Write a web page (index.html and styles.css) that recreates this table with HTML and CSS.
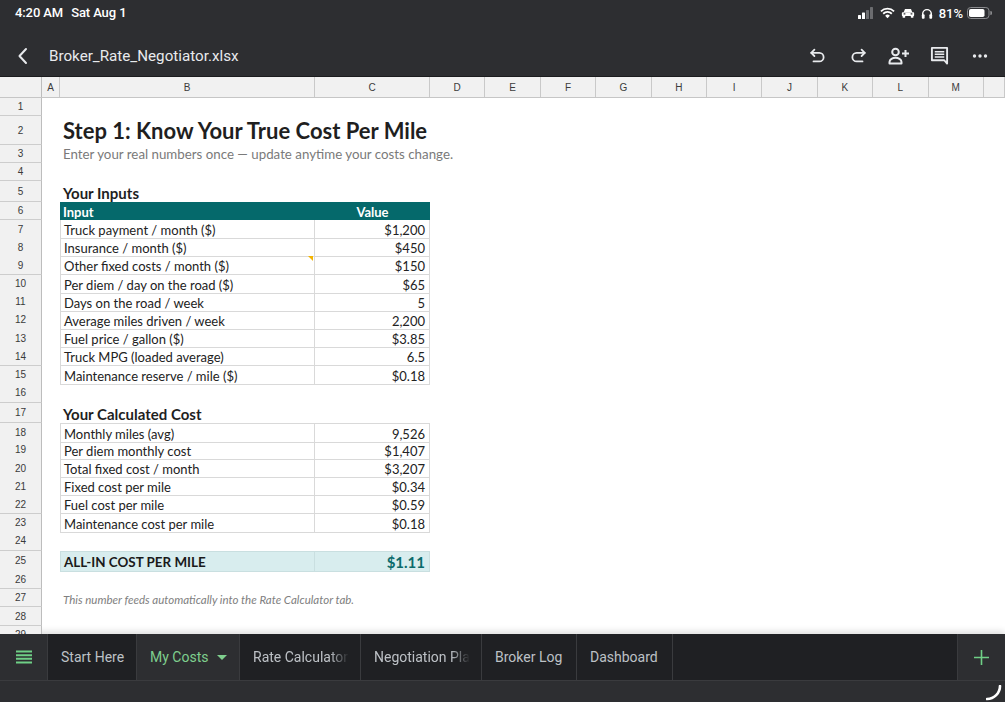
FILE: index.html
```html
<!DOCTYPE html>
<html>
<head>
<meta charset="utf-8">
<link rel="stylesheet" href="styles.css">
</head>
<body>
<div class="status">
  <div class="time">4:20 AM<span class="date">Sat Aug 1</span></div>
  <div class="sicons">
    <svg class="sig" width="16" height="12" viewBox="0 0 16 12"><rect x="0" y="8" width="3" height="4" rx=".6" fill="#fff"/><rect x="4" y="5.5" width="3" height="6.5" rx=".6" fill="#fff"/><rect x="8" y="3" width="3" height="9" rx=".6" fill="#6b6c6f"/><rect x="12" y="0" width="3" height="12" rx=".6" fill="#6b6c6f"/></svg>
    <svg width="15" height="12" viewBox="0 0 16 12"><path d="M8 11.6 L5.5 9 A3.5 3.5 0 0 1 10.5 9 Z" fill="#fff"/><path d="M3.4 6.8 A6.5 6.5 0 0 1 12.6 6.8" stroke="#fff" stroke-width="1.9" fill="none"/><path d="M1 4.3 A10 10 0 0 1 15 4.3" stroke="#fff" stroke-width="1.9" fill="none"/></svg>
    <svg width="14" height="12" viewBox="0 0 16 12"><path d="M3 5.2 L4.6 1.4 H11.4 L13 5.2 Z" fill="#fff"/><rect x="1" y="5" width="14" height="4.5" rx="1" fill="#fff"/><rect x="1.8" y="9" width="3" height="2.4" rx=".5" fill="#fff"/><rect x="11.2" y="9" width="3" height="2.4" rx=".5" fill="#fff"/><rect x="3" y="6.3" width="2" height="1.4" fill="#2d2e31"/><rect x="11" y="6.3" width="2" height="1.4" fill="#2d2e31"/></svg>
    <svg width="12" height="13" viewBox="0 0 14 14"><path d="M2 11 V7.5 A5 5 0 0 1 12 7.5 V11" stroke="#fff" stroke-width="1.7" fill="none"/><rect x="1" y="8" width="3.2" height="5" rx="1" fill="#fff"/><rect x="9.8" y="8" width="3.2" height="5" rx="1" fill="#fff"/></svg>
    <span class="batt-pct">81%</span>
    <svg width="25" height="12" viewBox="0 0 25 12"><rect x=".5" y=".5" width="21.5" height="11" rx="3.2" fill="none" stroke="#8a8b8e"/><rect x="2" y="2" width="15.5" height="8" rx="1.8" fill="#fff"/><path d="M23.3 4 A2 2 0 0 1 23.3 8 Z" fill="#8a8b8e"/></svg>
  </div>
</div>

<div class="toolbar">
  <svg class="back" width="12" height="18" viewBox="0 0 12 18"><path d="M9 2 L2.5 9 L9 16" stroke="#e8eaed" stroke-width="2" fill="none" stroke-linecap="round" stroke-linejoin="round"/></svg>
  <span class="title">Broker_Rate_Negotiator.xlsx</span>
  <div class="tools">
    <div class="tool"><svg width="18" height="18" viewBox="0 0 20 20"><path d="M6 3 L2.5 6.5 L6 10" stroke="#e8eaed" stroke-width="2" fill="none" stroke-linejoin="round" stroke-linecap="round"/><path d="M2.5 6.5 H11.5 A4.75 4.75 0 0 1 11.5 16 H5" stroke="#e8eaed" stroke-width="2" fill="none" stroke-linecap="round"/></svg></div>
    <div class="tool"><svg width="18" height="18" viewBox="0 0 20 20"><path d="M14 3 L17.5 6.5 L14 10" stroke="#e8eaed" stroke-width="2" fill="none" stroke-linejoin="round" stroke-linecap="round"/><path d="M17.5 6.5 H8.5 A4.75 4.75 0 0 0 8.5 16 H15" stroke="#e8eaed" stroke-width="2" fill="none" stroke-linecap="round"/></svg></div>
    <div class="tool"><svg width="22" height="18" viewBox="0 0 22 18"><circle cx="7.5" cy="5" r="3.3" stroke="#e8eaed" stroke-width="2" fill="none"/><path d="M1.5 16.5 V15 C1.5 12.3 4.8 10.8 7.5 10.8 C10.2 10.8 13.5 12.3 13.5 15 V16.5 Z" stroke="#e8eaed" stroke-width="2" fill="none" stroke-linejoin="round"/><path d="M17.5 3 V10 M14 6.5 H21" stroke="#e8eaed" stroke-width="2"/></svg></div>
    <div class="tool"><svg width="19" height="19" viewBox="0 0 20 20"><path d="M2 2 H18 V18.5 L15 15 H2 Z" stroke="#e8eaed" stroke-width="2" fill="none" stroke-linejoin="round"/><path d="M5 6 H15 M5 8.8 H15 M5 11.6 H15" stroke="#e8eaed" stroke-width="1.6"/></svg></div>
    <div class="tool"><svg width="16" height="6" viewBox="0 0 16 6"><circle cx="2.5" cy="3" r="1.7" fill="#e8eaed"/><circle cx="8" cy="3" r="1.7" fill="#e8eaed"/><circle cx="13.5" cy="3" r="1.7" fill="#e8eaed"/></svg></div>
  </div>
</div>

<div class="sheet">
  <div class="colhead">
    <div class="ch"></div><div class="ch">A</div><div class="ch">B</div><div class="ch">C</div><div class="ch">D</div><div class="ch">E</div><div class="ch">F</div><div class="ch">G</div><div class="ch">H</div><div class="ch">I</div><div class="ch">J</div><div class="ch">K</div><div class="ch">L</div><div class="ch">M</div><div class="ch"></div>
  </div>
  <div class="body">
    <div class="row h18"><div class="rh">1</div></div>
    <div class="row h29"><div class="rh">2</div><div class="cb title-cell">Step 1: Know Your True Cost Per Mile</div></div>
    <div class="row h18"><div class="rh">3</div><div class="cb sub">Enter your real numbers once — update anytime your costs change.</div></div>
    <div class="row h18"><div class="rh">4</div></div>
    <div class="row h21"><div class="rh">5</div><div class="cb section">Your Inputs</div></div>
    <div class="row h18"><div class="rh">6</div><div class="cb thead">Input</div><div class="cc thead center">Value</div></div>
    <div class="row h182"><div class="rh">7</div><div class="cb td">Truck payment / month ($)</div><div class="cc tv">$1,200</div></div>
    <div class="row h182"><div class="rh">8</div><div class="cb td">Insurance / month ($)</div><div class="cc tv">$450</div></div>
    <div class="row h182"><div class="rh">9</div><div class="cb td note">Other fixed costs / month ($)</div><div class="cc tv">$150</div></div>
    <div class="row h182"><div class="rh">10</div><div class="cb td">Per diem / day on the road ($)</div><div class="cc tv">$65</div></div>
    <div class="row h182"><div class="rh">11</div><div class="cb td">Days on the road / week</div><div class="cc tv">5</div></div>
    <div class="row h182"><div class="rh">12</div><div class="cb td">Average miles driven / week</div><div class="cc tv">2,200</div></div>
    <div class="row h182"><div class="rh">13</div><div class="cb td">Fuel price / gallon ($)</div><div class="cc tv">$3.85</div></div>
    <div class="row h182"><div class="rh">14</div><div class="cb td">Truck MPG (loaded average)</div><div class="cc tv">6.5</div></div>
    <div class="row h182"><div class="rh">15</div><div class="cb td">Maintenance reserve / mile ($)</div><div class="cc tv">$0.18</div></div>
    <div class="row h19"><div class="rh">16</div></div>
    <div class="row h20"><div class="rh">17</div><div class="cb section">Your Calculated Cost</div></div>
    <div class="row h182"><div class="rh">18</div><div class="cb td first">Monthly miles (avg)</div><div class="cc tv first">9,526</div></div>
    <div class="row h182"><div class="rh">19</div><div class="cb td">Per diem monthly cost</div><div class="cc tv">$1,407</div></div>
    <div class="row h182"><div class="rh">20</div><div class="cb td">Total fixed cost / month</div><div class="cc tv">$3,207</div></div>
    <div class="row h182"><div class="rh">21</div><div class="cb td">Fixed cost per mile</div><div class="cc tv">$0.34</div></div>
    <div class="row h182"><div class="rh">22</div><div class="cb td">Fuel cost per mile</div><div class="cc tv">$0.59</div></div>
    <div class="row h182"><div class="rh">23</div><div class="cb td">Maintenance cost per mile</div><div class="cc tv">$0.18</div></div>
    <div class="row h19"><div class="rh">24</div></div>
    <div class="row h20"><div class="rh">25</div><div class="cb total-l">ALL-IN COST PER MILE</div><div class="cc total-v">$1.11</div></div>
    <div class="row h18"><div class="rh">26</div></div>
    <div class="row h185"><div class="rh">27</div><div class="cb foot">This number feeds automatically into the Rate Calculator tab.</div></div>
    <div class="row h185"><div class="rh">28</div></div>
    <div class="row h18"><div class="rh">29</div></div>
  </div>
</div>

<div class="tabbar">
  <div class="menu"><svg width="16" height="14" viewBox="0 0 16 14"><path d="M0 1.5 H16 M0 5.2 H16 M0 8.8 H16 M0 12.5 H16" stroke="#6fcf86" stroke-width="2"/></svg></div>
  <div class="tab w89">Start Here</div>
  <div class="tab active w103">My Costs<span class="caret"></span></div>
  <div class="tab fade w121"><span class="lbl">Rate Calculator</span></div>
  <div class="tab fade w121"><span class="lbl">Negotiation Plan</span></div>
  <div class="tab w95">Broker Log</div>
  <div class="tab w96">Dashboard</div>
  <div class="tab-fill"></div>
  <div class="add"><svg width="15" height="15" viewBox="0 0 15 15"><path d="M7.5 0 V15 M0 7.5 H15" stroke="#6fcf86" stroke-width="1.6"/></svg></div>
</div>
<div class="homebar"><svg class="corner" width="16" height="16" viewBox="0 0 16 16"><path d="M14 1 A13 13 0 0 1 1 14" stroke="#fff" stroke-width="2.6" fill="none" stroke-linecap="round"/></svg></div>
</body>
</html>
```

FILE: styles.css
```css
* { box-sizing: border-box; }
html, body { margin: 0; padding: 0; }
body {
  width: 1005px;
  height: 702px;
  overflow: hidden;
  background: #2d2e31;
  font-family: Roboto, "Liberation Sans", sans-serif;
}

/* status bar */
.status {
  height: 35px;
  background: #2d2e31;
  display: flex;
  justify-content: space-between;
  align-items: flex-start;
  padding: 5px 13px 0 15px;
  color: #fff;
}
.time { font-size: 13px; line-height: 16px; font-weight: 500; letter-spacing: -0.1px; }
.date { margin-left: 8px; }
.sicons { display: flex; align-items: center; gap: 6px; height: 16px; }
.batt-pct { font-size: 13px; font-weight: 500; margin-right: -2px; }

/* toolbar */
.toolbar {
  height: 42px;
  background: #2d2e31;
  display: flex;
  align-items: center;
  padding: 0 5px 0 17px;
  border-bottom: 1px solid #1b1c1e;
}
.back { margin-right: 20px; }
.title { color: #e8eaed; font-size: 15.2px; }
.tools { margin-left: auto; display: flex; }
.tool { width: 40.5px; height: 40px; display: flex; align-items: center; justify-content: center; }

/* sheet */
.sheet { height: 557px; background: #fff; overflow: hidden; }
.colhead {
  display: grid;
  grid-template-columns: 42px 18px 255px 115px repeat(10, 55.4px) 1fr;
  height: 21px;
  background: #f1f1f1;
  border-bottom: 1px solid #c6c6c6;
}
.ch {
  border-right: 1px solid #c9c9c9;
  font-size: 10px;
  color: #3c3c3c;
  display: flex;
  align-items: center;
  justify-content: center;
  font-family: "Liberation Sans", Arial, sans-serif;
}
.ch:first-child { border-right: 1px solid #bdbdbd; }
.body { height: 536px; overflow: hidden; font-family: Lato, "Open Sans", sans-serif; color: #222; }
.row {
  display: grid;
  grid-template-columns: 42px 18px 255px 115px 1fr;
}
.h18 { height: 18px; }
.h182 { height: 18.2px; }
.h185 { height: 18.5px; }
.h19 { height: 19px; }
.h20 { height: 20px; }
.h21 { height: 21px; }
.h29 { height: 29px; }
.rh {
  grid-column: 1;
  background: #f1f1f1;
  border-right: 1px solid #bdbdbd;
  border-bottom: 1px solid #cdcdcd;
  font-size: 10px;
  color: #3a3a3a;
  display: flex;
  align-items: center;
  justify-content: center;
  font-family: "Liberation Sans", Arial, sans-serif;
}
.cb { grid-column: 3; display: flex; align-items: center; padding-left: 3px; white-space: nowrap; font-size: 13px; position: relative; }
.cc { grid-column: 4; display: flex; align-items: center; justify-content: flex-end; padding-right: 4px; font-size: 13px; white-space: nowrap; }
.title-cell { font-size: 22px; font-weight: 700; color: #1f1f1f; align-items: flex-end; padding-bottom: 1px; }
.sub { font-size: 13.3px; color: #7a7a7a; }
.section { font-size: 15px; font-weight: 700; color: #1f1f1f; align-items: flex-end; }
.thead { background: #05696b; color: #fff; font-weight: 700; font-size: 13px; padding-top: 2px; }
.center { justify-content: center; padding-right: 0; }
.td { border-left: 1px solid #d9d9d9; border-right: 1px solid #d9d9d9; border-bottom: 1px solid #d9d9d9; padding-top: 2px; }
.tv { border-right: 1px solid #d9d9d9; border-bottom: 1px solid #d9d9d9; padding-top: 2px; }
.first { border-top: 1px solid #d9d9d9; }
.note::after {
  content: "";
  position: absolute;
  top: 0;
  right: 1px;
  border-top: 5px solid #f4b400;
  border-left: 5px solid transparent;
}
.total-l {
  background: #d8edee;
  border: 1px solid #c9dfe0;
  font-weight: 700;
  font-size: 13.4px;
  color: #1a1a1a;
  padding-top: 1px;
}
.total-v {
  background: #d8edee;
  border-top: 1px solid #c9dfe0;
  border-bottom: 1px solid #c9dfe0;
  border-right: 1px solid #c9dfe0;
  font-weight: 700;
  font-size: 15px;
  color: #0b6b6c;
  padding-top: 1px;
}
.foot { font-style: italic; font-size: 11.5px; color: #808080; padding-top: 2px; }

/* tab bar */
.tabbar {
  height: 47px;
  background: #1f2023;
  display: flex;
  box-shadow: 0 -3px 6px rgba(0, 0, 0, 0.12);
  border-bottom: 1px solid #3a3b3e;
}
.menu { width: 48px; background: #2d2e31; display: flex; align-items: center; justify-content: center; border-right: 1px solid #3a3b3e; padding-left: 1px; }
.tab {
  display: flex;
  align-items: center;
  padding: 0 0 0 13px;
  color: #bdc1c6;
  font-size: 14px;
  border-right: 1px solid #3a3b3e;
  white-space: nowrap;
  overflow: hidden;
}
.tab.active { background: #2d2e31; color: #7fcf8e; }
.caret {
  margin-left: 9px;
  border-top: 5px solid #7fcf8e;
  border-left: 5px solid transparent;
  border-right: 5px solid transparent;
}
.w89 { width: 89px; }
.w103 { width: 103px; }
.w95 { width: 95px; }
.w96 { width: 96px; }
.w121 { width: 121px; }
.fade .lbl {
  display: block;
  overflow: hidden;
  width: 96px;
  -webkit-mask-image: linear-gradient(to right, #000 80%, transparent 100%);
  mask-image: linear-gradient(to right, #000 80%, transparent 100%);
}
.tab-fill { flex: 1; border-right: 1px solid #3a3b3e; }
.add { width: 47px; background: #2d2e31; display: flex; align-items: center; justify-content: center; }
.homebar { height: 21px; background: #2d2e31; display: flex; justify-content: flex-end; align-items: flex-start; padding: 4px 3px 0 0; }
```
